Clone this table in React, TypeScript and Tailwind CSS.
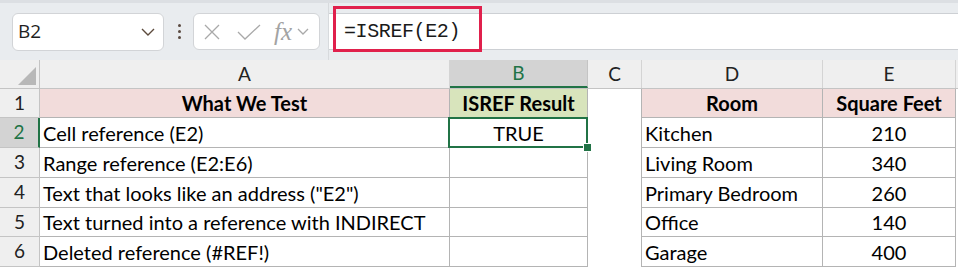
import React from 'react';

const bodyFont = { fontFamily: 'Lato, "Open Sans", sans-serif' };

type Row = { n: number; a: string; b: string; d: string; e: string };

const rows: Row[] = [
  { n: 2, a: 'Cell reference (E2)', b: 'TRUE', d: 'Kitchen', e: '210' },
  { n: 3, a: 'Range reference (E2:E6)', b: '', d: 'Living Room', e: '340' },
  { n: 4, a: 'Text that looks like an address ("E2")', b: '', d: 'Primary Bedroom', e: '260' },
  { n: 5, a: 'Text turned into a reference with INDIRECT', b: '', d: 'Office', e: '140' },
  { n: 6, a: 'Deleted reference (#REF!)', b: '', d: 'Garage', e: '400' },
];

const heights = [30, 30, 30, 29, 30];

function Toolbar() {
  return (
    <div className="h-[60px] flex items-center bg-[#e9ecef] border-t-[3px] border-[#dcdfe3] relative">
      {/* name box */}
      <div className="ml-[12px] w-[152px] h-[38px] rounded-[6px] border border-[#d2d4d7] bg-white flex items-center pl-[5px] pr-[8px]">
        <span className="text-[19px] text-[#1f1f1f] flex-1" style={{ fontFamily: '"Open Sans", sans-serif' }}>
          B2
        </span>
        <svg width="14" height="8" viewBox="0 0 14 8">
          <path d="M1 1 L7 7 L13 1" fill="none" stroke="#5c4a3c" strokeWidth="1.4" />
        </svg>
      </div>
      {/* dots */}
      <div className="ml-[13px] w-[4px] flex flex-col gap-[3px] items-center">
        <span className="w-[3px] h-[3px] rounded-full bg-[#5a4a40]" />
        <span className="w-[3px] h-[3px] rounded-full bg-[#5a4a40]" />
        <span className="w-[3px] h-[3px] rounded-full bg-[#5a4a40]" />
      </div>
      {/* cancel / enter / fx */}
      <div className="ml-[12px] w-[127px] h-[37px] rounded-[6px] border border-[#d2d4d7] bg-white flex items-center pl-[10px]">
        <svg width="16" height="16" viewBox="0 0 16 16">
          <path d="M1 1 L15 15 M15 1 L1 15" stroke="#a9a9a9" strokeWidth="1.3" />
        </svg>
        <svg width="24" height="16" viewBox="0 0 24 16" className="ml-[17px]">
          <path d="M1 8 L8 15 L23 1" fill="none" stroke="#a9a9a9" strokeWidth="1.3" />
        </svg>
        <span
          className="ml-[13px] text-[25px] italic text-[#a3a3a3] leading-none"
          style={{ fontFamily: '"Liberation Serif", serif' }}
        >
          fx
        </span>
        <svg width="12" height="7" viewBox="0 0 12 7" className="ml-[5px]">
          <path d="M1 1 L6 6 L11 1" fill="none" stroke="#a9a9a9" strokeWidth="1.3" />
        </svg>
      </div>
      <div className="ml-[8px] w-px self-stretch bg-[#d7dadd]" />
      {/* formula bar */}
      <div className="flex-1 h-[37px] bg-white border-y border-[#cdd0d4] flex items-center pl-[15px]">
        <span className="text-[20px] text-[#1a1a1a] tracking-[-0.4px]" style={{ fontFamily: '"Liberation Mono", monospace' }}>
          =ISREF(E2)
        </span>
      </div>
      {/* highlight annotation */}
      <div className="absolute left-[333px] top-[3px] w-[149px] h-[46px] border-[3px] border-[#e0204c]" />
    </div>
  );
}

function ColHeaders() {
  const cell = 'h-full border-r border-[#d4d4d4] flex items-center justify-center';
  return (
    <div className="flex h-[29px] bg-[#efefef] border-b border-[#c4c4c4] text-[19px] text-[#222]" style={bodyFont}>
      <div className="w-[40px] h-full border-r border-[#c4c4c4] flex items-end justify-end p-[3px]">
        <svg width="18" height="18" viewBox="0 0 18 18">
          <path d="M18 0 L18 18 L0 18 Z" fill="#b8b8b8" />
        </svg>
      </div>
      <div className={`${cell} w-[410px]`}>A</div>
      <div className="w-[138px] h-full bg-[#d3d3d3] border-r border-[#c4c4c4] border-b-2 border-b-[#217346] text-[#217346] flex items-center justify-center">
        B
      </div>
      <div className={`${cell} w-[54px]`}>C</div>
      <div className={`${cell} w-[181px]`}>D</div>
      <div className={`${cell} w-[133px]`}>E</div>
      <div className="flex-1" />
    </div>
  );
}

function RowHead({ n, selected }: { n: number; selected?: boolean }) {
  return (
    <div
      className={
        selected
          ? 'w-[40px] h-full bg-[#d3d3d3] border-b border-[#c4c4c4] border-r-2 border-r-[#217346] text-[#217346] text-[19px] flex items-center justify-center'
          : 'w-[40px] h-full bg-[#efefef] border-b border-r border-[#c4c4c4] text-[#222] text-[19px] flex items-center justify-center'
      }
    >
      {n}
    </div>
  );
}

export default function App() {
  const line = 'border-r border-b border-[#b4b4b4]';
  return (
    <div className="w-[958px] h-[269px] bg-white overflow-hidden">
      <Toolbar />
      <ColHeaders />
      <div className="text-[20px] text-black" style={bodyFont}>
        {/* header row */}
        <div className="flex h-[29px]">
          <RowHead n={1} />
          <div className={`${line} w-[410px] bg-[#f2dcdb] font-bold flex items-center justify-center`}>What We Test</div>
          <div className={`${line} w-[138px] bg-[#d8e4bc] font-bold flex items-center justify-center`}>ISREF Result</div>
          <div className="w-[54px] border-r border-[#b4b4b4]" />
          <div className={`${line} w-[181px] bg-[#f2dcdb] font-bold flex items-center justify-center`}>Room</div>
          <div className={`${line} w-[133px] bg-[#f2dcdb] font-bold flex items-center justify-center`}>Square Feet</div>
        </div>
        {rows.map((r, i) => (
          <div key={r.n} className={r.n === 2 ? 'flex relative z-10' : 'flex'} style={{ height: heights[i] }}>
            <RowHead n={r.n} selected={r.n === 2} />
            <div className={`${line} w-[410px] flex items-center pl-[3px]`}>{r.a}</div>
            <div className={`${line} w-[138px] flex items-center justify-center relative`}>
              {r.b}
              {r.n === 2 && (
                <>
                  <div className="absolute -left-[2px] -top-[1px] w-[140px] h-[31px] border-2 border-[#217346]" />
                  <div className="absolute -right-[5px] -bottom-[5px] w-[9px] h-[9px] bg-[#217346] border border-white" />
                </>
              )}
            </div>
            <div className="w-[54px] border-r border-[#b4b4b4]" />
            <div className={`${line} w-[181px] flex items-center pl-[3px]`}>{r.d}</div>
            <div className={`${line} w-[133px] flex items-center justify-center`}>{r.e}</div>
          </div>
        ))}
      </div>
    </div>
  );
}
